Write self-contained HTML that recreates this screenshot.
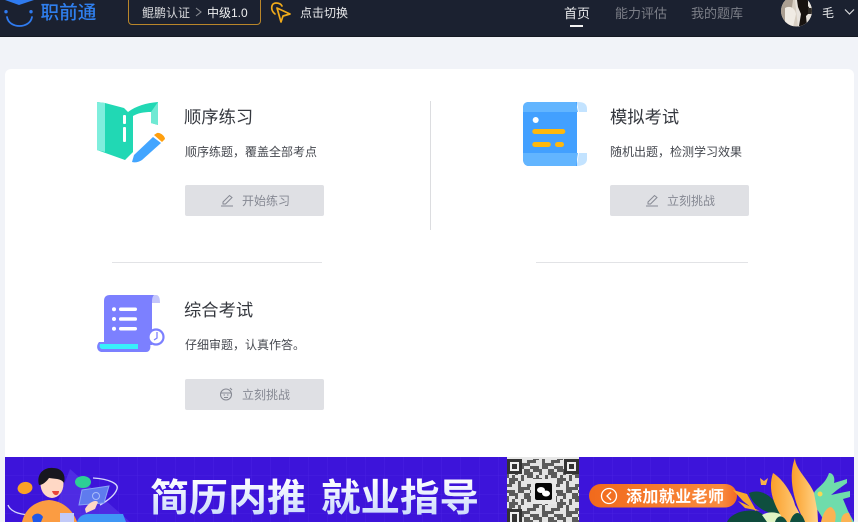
<!DOCTYPE html>
<html lang="zh"><head><meta charset="utf-8">
<style>
*{margin:0;padding:0;box-sizing:border-box}
html,body{width:858px;height:522px;overflow:hidden;background:#f1f3f8;font-family:"Liberation Sans","Noto Sans CJK SC",sans-serif}
#w{position:absolute;left:0;top:0;width:858px;height:522px;overflow:hidden;filter:blur(.35px)}
.a{position:absolute;white-space:nowrap}
.hd{position:absolute;left:0;top:0;width:858px;height:37px;background:#1b2130;border-bottom:1px solid #141822}
.card{position:absolute;left:5px;top:69px;width:849px;height:400px;background:#fff;border-radius:6px}
.t{font-size:17.3px;color:#34373e;line-height:24px}
.s{font-size:12px;color:#45484f;line-height:16px}
.b{position:absolute;width:139px;height:31px;background:#dfe0e4;border-radius:2px;color:#868993;font-size:12px;line-height:31px}
.b span{position:absolute;left:57px;top:1px;white-space:nowrap}
.b svg{position:absolute;left:35px;top:8px}
.ln{position:absolute;height:1px;background:#e2e3e6}
.nav{font-size:13px;color:#7c7f88;top:5px;line-height:18px}
</style></head><body><div id="w">
<div class="hd"></div>
<svg class="a" style="left:0;top:0" width="40" height="30" viewBox="0 0 40 30"><path d="M5 0H34L19 5Z" fill="#2f7bf0"/><circle cx="6" cy="11.700" r="1.700" fill="#2f7bf0"/><circle cx="31" cy="11.700" r="1.700" fill="#2f7bf0"/><path d="M7 17C9 29 30 29 32 17" fill="none" stroke="#2f7bf0" stroke-width="1.800" stroke-linecap="round"/></svg>
<div class="a" style="left:40.500px;top:0;font-size:18.600px;line-height:25px;color:#2f7fee;font-weight:500">职前通</div>
<div class="a" style="left:128px;top:-4px;width:133px;height:29px;border:1px solid #b9862a;border-radius:4px"></div>
<div class="a" style="left:142px;top:5px;font-size:12px;line-height:16px;color:#d6d7da">鲲鹏认证</div>
<svg class="a" style="left:195px;top:7px" width="8" height="10" viewBox="0 0 8 10"><path d="M1 1L6 5L1 9" fill="none" stroke="#8b8e95" stroke-width="1.100"/></svg>
<div class="a" style="left:207px;top:5px;font-size:12px;line-height:16px;color:#eeeff0">中级1.0</div>
<svg class="a" style="left:269px;top:1px" width="24" height="22" viewBox="0 0 24 22"><path d="M8 7L21 13L14 15L12 21Z" fill="none" stroke="#f0ab1a" stroke-width="1.700" stroke-linejoin="round"/><path d="M6 13C1 9 2 2 7 2C10 2 12 3 13 5" fill="none" stroke="#f0ab1a" stroke-width="1.700" stroke-linecap="round"/></svg>
<div class="a" style="left:300px;top:5px;font-size:12px;line-height:17px;color:#e8e9eb">点击切换</div>
<div class="a nav" style="left:564px;color:#e8e9eb">首页</div>
<div class="a" style="left:570px;top:25px;width:13px;height:2px;background:#f2f2f2"></div>
<div class="a nav" style="left:615px">能力评估</div>
<div class="a nav" style="left:691px">我的题库</div>
<svg class="a" style="left:781px;top:0" width="31" height="27" viewBox="0 0 31 27"><clipPath id="av"><circle cx="15.500" cy="11" r="15.500"/></clipPath><g clip-path="url(#av)"><rect width="31" height="27" fill="#d8cfc3"/><path d="M0 0H12L8 27H0Z" fill="#ab9f92"/><path d="M4 8C9 5 14 8 15 14L12 27H4Z" fill="#f0ebe4"/><path d="M14 0H31V27H17Z" fill="#e8e3dd"/><path d="M16 0H27V6L30 11L25 16L26 26H18L20 14L17 7Z" fill="#17120f"/><rect x="27" y="8" width="4" height="6" fill="#2e2a26"/></g></svg>
<div class="a" style="left:822px;top:5px;font-size:12px;line-height:16px;color:#e4e5e7">毛</div>
<svg class="a" style="left:844px;top:8px" width="11" height="8" viewBox="0 0 11 8"><path d="M1 1.500L5.500 6L10 1.500" fill="none" stroke="#d7d8db" stroke-width="1.200"/></svg>

<div class="card"></div>
<div class="a" style="left:430px;top:101px;width:1px;height:129px;background:#dcdde0"></div>
<div class="ln" style="left:112px;top:262px;width:210px"></div>
<div class="ln" style="left:536px;top:262px;width:212px"></div>

<svg class="a" style="left:96px;top:101px" width="74" height="64" viewBox="0 0 74 64">
<path d="M1 1L9 2L28 7L32 11C40 5 50 2 62 1V24L55 22V11C48 11 42 12 37 15V51L29 59L1 49Z" fill="#21d8b4"/>
<path d="M1 1L9 2V51L1 49Z" fill="#7feedd"/><path d="M55 22V11L62 1V24Z" fill="#6fe9d3"/>
<rect x="27" y="14" width="3" height="9" rx="1" fill="#fff"/><rect x="27" y="26" width="3" height="15" rx="1" fill="#fff"/>
<path d="M36 61L38 54L57 36L65 42L46 59C43 61 39 62 36 61Z" fill="#42a5ff"/><path d="M58 34L61 32C64 31 69 35 69 38L66 41Z" fill="#ff9f0e"/></svg>
<div class="a t" style="left:184px;top:105px">顺序练习</div>
<div class="a s" style="left:185px;top:144px">顺序练题，覆盖全部考点</div>
<div class="b" style="left:185px;top:185px"><svg width="15" height="15" viewBox="0 0 15 15"><path d="M3 9L9.500 2.500L12 4.500L5.500 11H3ZM1 13H13" fill="none" stroke="#868993" stroke-width="1"/></svg><span>开始练习</span></div>

<svg class="a" style="left:522px;top:101px" width="66" height="66" viewBox="0 0 66 66">
<path d="M56 1C62 1 65 3 65 8V11H57C56 8 56 4 54 1ZM57 52H65V58C65 62 62 65 54 65C56 61 56 56 57 52Z" fill="#c3e3ff"/>
<path d="M7 1H55V65H7C3 65 1 62 1 58V7C1 3 3 1 7 1Z" fill="#42a0ff"/>
<path d="M7 1H54C55 4 55 8 56 11H1V7C1 3 3 1 7 1ZM1 52H56C55 56 55 61 54 65H7C3 65 1 62 1 58Z" fill="#62b5ff"/>
<circle cx="13.700" cy="19" r="3" fill="#fff"/><rect x="10.300" y="28" width="33" height="5" rx="2.500" fill="#ffb80d"/><rect x="10.300" y="41" width="18.500" height="5" rx="2.500" fill="#ffb80d"/><rect x="33" y="41" width="9" height="5" rx="2.500" fill="#ffb80d"/></svg>
<div class="a t" style="left:610px;top:105px">模拟考试</div>
<div class="a s" style="left:610px;top:144px">随机出题，检测学习效果</div>
<div class="b" style="left:610px;top:185px"><svg width="15" height="15" viewBox="0 0 15 15"><path d="M3 9L9.500 2.500L12 4.500L5.500 11H3ZM1 13H13" fill="none" stroke="#868993" stroke-width="1"/></svg><span>立刻挑战</span></div>

<svg class="a" style="left:96px;top:295px" width="70" height="58" viewBox="0 0 70 58">
<path d="M14 0H56V50H8V6C8 2 10 0 14 0Z" fill="#7c80ff"/>
<path d="M55 0H60C63 0 64 3 64 8H56C56 4 56 2 55 0Z" fill="#c4c6fb"/><path d="M54 0H58C56 2 56 5 56 8H54Z" fill="#7c80ff"/>
<path d="M3 47H52C55 47 56 57 50 57H6C2 57 -1 52 3 47Z" fill="#7c80ff"/>
<path d="M4 49H42V54H6C4 54 3 51 4 49Z" fill="#38f0fb"/>
<circle cx="18" cy="14.300" r="2" fill="#fff"/><circle cx="18" cy="24" r="2" fill="#fff"/><circle cx="18" cy="33.700" r="2" fill="#fff"/><rect x="23" y="12.500" width="18" height="3.500" rx="1.700" fill="#fff"/><rect x="23" y="22.300" width="18" height="3.500" rx="1.700" fill="#fff"/><rect x="23" y="32" width="18" height="3.500" rx="1.700" fill="#fff"/>
<circle cx="60" cy="42" r="7.500" fill="#fff" stroke="#7c80ff" stroke-width="2.200"/><path d="M61 37V43L58 45" fill="none" stroke="#7c80ff" stroke-width="1.300"/></svg>
<div class="a t" style="left:184px;top:298px">综合考试</div>
<div class="a s" style="left:185px;top:337px">仔细审题，认真作答。</div>
<div class="b" style="left:185px;top:379px"><svg width="15" height="15" viewBox="0 0 15 15"><circle cx="6" cy="7.500" r="5.500" fill="none" stroke="#868993" stroke-width="1.100"/><path d="M1 6H11M3.500 8H5M7 8H8.500M4 10.500H8M10 1L12 3" fill="none" stroke="#868993" stroke-width="1.100"/></svg><span>立刻挑战</span></div>

<svg class="a" style="left:5px;top:457px" width="849" height="65" viewBox="0 0 849 65">
<defs>
<linearGradient id="tx" x1="0" y1="0" x2="0" y2="1"><stop offset="0" stop-color="#fff"/><stop offset="1" stop-color="#c5d6fb"/></linearGradient>
<linearGradient id="or" x1="0" y1="0" x2="1" y2="0"><stop offset="0" stop-color="#f16a1c"/><stop offset=".9" stop-color="#f98a3d"/><stop offset="1" stop-color="#f26b21"/></linearGradient>
<linearGradient id="lf" x1="0" y1="0" x2="1" y2="0"><stop offset="0" stop-color="#fb9f2a"/><stop offset="1" stop-color="#ffd48a"/></linearGradient>
<pattern id="gd" width="19" height="19" patternUnits="userSpaceOnUse"><path d="M19 0V19H0" fill="none" stroke="#5029e6" stroke-width=".6"/></pattern>
<pattern id="qr" width="24" height="24" patternUnits="userSpaceOnUse"><rect width="24" height="24" fill="#e4e4e4"/><path d="M0 0h6v3H3v3H0zM9 0h3v6h6V3h6v3h-3v3h-6v3H9zM0 9h6v3h3v6H6v-3H0zM15 12h6v3h3v6h-6v-3h-3zM0 21h9v3H0zM12 18h3v6h-3zM3 18h3v3H3zM21 9h3v3h-3z" fill="#5a5a5a"/></pattern>
</defs>
<rect width="849" height="65" fill="#3d14da"/><rect width="849" height="65" fill="url(#gd)"/>
<path d="M65 12L125 65H45Z" fill="#5a3bea" opacity=".6"/>
<path d="M3 48C6 56 18 58 28 58" fill="none" stroke="#d6d8fb" stroke-width="1.300"/><path d="M88 21C105 22 114 27 112 32C110 38 102 44 95 48" fill="none" stroke="#d6d8fb" stroke-width="1.300"/>
<ellipse cx="20" cy="31" rx="7.500" ry="6" fill="#fba127" transform="rotate(-12 20 31)"/><ellipse cx="78" cy="25" rx="8" ry="6" fill="#2dcf95"/>
<path d="M17 65C20 52 30 44 44 43C58 44 68 53 72 65Z" fill="#fb9c42"/>
<ellipse cx="47" cy="27" rx="11.500" ry="14" fill="#ffd8c5"/><path d="M34 28C31 17 39 10 48 11C58 11 61 19 59 26C56 21 49 22 44 21C42 24 38 28 34 28Z" fill="#17171f"/>
<path d="M47 34L54 34C54 39 49 40 47 34Z" fill="#e8443a"/>
<path d="M27 60C30 55 36 56 38 60L36 65H28Z" fill="#1f58e8"/>
<path d="M72 65C74 59 78 57 84 57H118L121 65Z" fill="#3f96f5"/>
<path d="M77 33L104 29L99 46L74 48Z" fill="#5f7bee" stroke="#8aa4f6" stroke-width="1"/><circle cx="91" cy="39" r="3.500" fill="none" stroke="#a9bdf9"/>
<path d="M80 52C83 46 90 42 93 45L90 52L81 56Z" fill="#ffd8c5"/><rect x="55" y="56" width="14" height="9" fill="#c2caf8"/>
<text x="145" y="54" font-size="38" font-weight="700" fill="url(#tx)" font-family="Liberation Sans,Noto Sans CJK SC,sans-serif" textLength="156" lengthAdjust="spacingAndGlyphs">简历内推</text>
<text x="316" y="54" font-size="38" font-weight="700" fill="url(#tx)" font-family="Liberation Sans,Noto Sans CJK SC,sans-serif" textLength="158" lengthAdjust="spacingAndGlyphs">就业指导</text>
<rect x="502" y="0" width="72" height="65" fill="#e8e8e8"/><rect x="502" y="2" width="72" height="63" fill="url(#qr)"/>
<rect x="502" y="2" width="15" height="15" fill="#333"/><rect x="505" y="5" width="9" height="9" fill="#eee"/><rect x="507" y="7" width="5" height="5" fill="#333"/>
<rect x="559" y="2" width="15" height="15" fill="#333"/><rect x="562" y="5" width="9" height="9" fill="#eee"/><rect x="564" y="7" width="5" height="5" fill="#333"/>
<rect x="502" y="52" width="15" height="13" fill="#333"/><rect x="505" y="55" width="9" height="10" fill="#eee"/><rect x="507" y="57" width="5" height="8" fill="#333"/>
<rect x="526" y="22" width="25" height="25" rx="2" fill="#e8e8e8"/><rect x="530" y="26" width="17" height="17" rx="2" fill="#050505"/><ellipse cx="536" cy="33" rx="4" ry="3" fill="#fff"/><ellipse cx="541" cy="36.500" rx="4" ry="3" fill="#fff"/>
<rect x="584" y="27" width="148" height="23.500" rx="11.700" fill="url(#or)"/>
<circle cx="604" cy="39" r="7.500" fill="none" stroke="#fff" stroke-width="1.300"/><path d="M606 35L602 39L606 43" fill="none" stroke="#fff" stroke-width="1.300"/>
<text x="621" y="45" font-size="16" font-weight="700" fill="#fff" font-family="Liberation Sans,Noto Sans CJK SC,sans-serif" textLength="98">添加就业老师</text>
<path d="M728 33L742 37L752 55L738 44ZM733 44L755 54L740 51Z" fill="#f9a82d"/>
<path d="M744 36C758 30 772 42 780 62L760 54C752 50 746 44 744 36Z" fill="#0f4f3f"/>
<path d="M722 65C726 56 740 52 752 54L772 65Z" fill="#0e4a3c"/>
<path d="M757 58C765 53 778 55 786 65H762Z" fill="#dff5c4"/>
<path d="M768 16C778 22 788 38 790 48L799 65H780C770 50 762 34 768 16Z" fill="url(#lf)"/>
<path d="M790 1C790 14 808 25 812 45L813 65H800C790 48 782 22 790 1Z" fill="url(#lf)"/>
<path d="M785 65C788 54 796 52 800 65ZM770 65C772 58 778 57 782 65Z" fill="#0f4f3f"/>
<path d="M809 36C812 30 820 28 824 16C829 16 830 22 829 26L842 22V26L832 33L826 38L835 36L845 34V40L838 42L843 54L849 65H820L812 52Z" fill="#6fdcab"/>
<path d="M816 65C818 56 822 50 826 50C832 54 831 60 830 65ZM836 65C836 58 840 55 844 56L847 65Z" fill="#fbb253"/>
<path d="M755 21L759 24L763 21L761 28H756Z" fill="#f9b24a"/><circle cx="815" cy="37" r="2.500" fill="#f8da52"/>
</svg>
</div></body></html>
